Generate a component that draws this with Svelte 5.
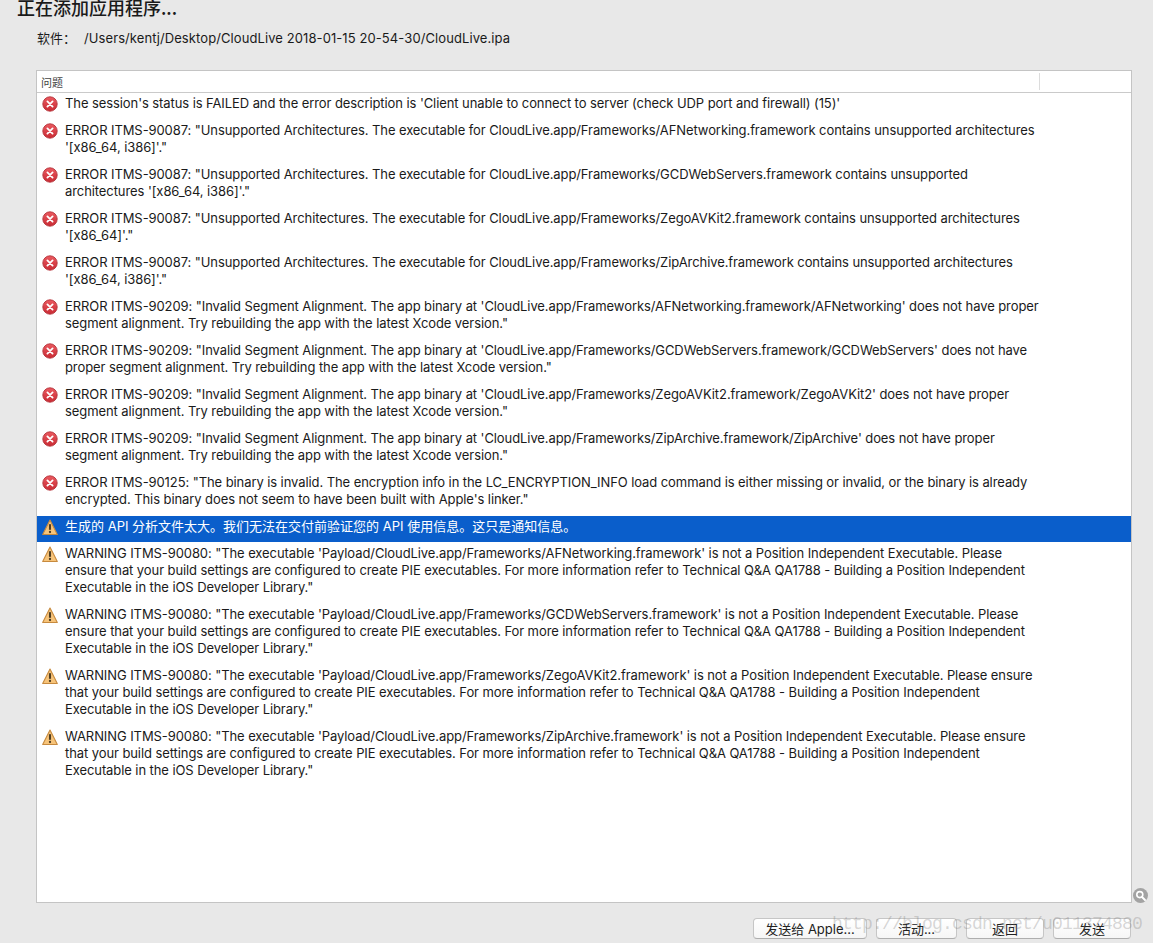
<script>
  const issues = [
    { type: "error", lines: ["The session's status is FAILED and the error description is 'Client unable to connect to server (check UDP port and firewall) (15)'"] },
    { type: "error", lines: ['ERROR ITMS-90087: "Unsupported Architectures. The executable for CloudLive.app/Frameworks/AFNetworking.framework contains unsupported architectures', "'[x86_64, i386]'.\""] },
    { type: "error", lines: ['ERROR ITMS-90087: "Unsupported Architectures. The executable for CloudLive.app/Frameworks/GCDWebServers.framework contains unsupported', "architectures '[x86_64, i386]'.\""] },
    { type: "error", lines: ['ERROR ITMS-90087: "Unsupported Architectures. The executable for CloudLive.app/Frameworks/ZegoAVKit2.framework contains unsupported architectures', "'[x86_64]'.\""] },
    { type: "error", lines: ['ERROR ITMS-90087: "Unsupported Architectures. The executable for CloudLive.app/Frameworks/ZipArchive.framework contains unsupported architectures', "'[x86_64, i386]'.\""] },
    { type: "error", lines: ["ERROR ITMS-90209: \"Invalid Segment Alignment. The app binary at 'CloudLive.app/Frameworks/AFNetworking.framework/AFNetworking' does not have proper", 'segment alignment. Try rebuilding the app with the latest Xcode version."'] },
    { type: "error", lines: ["ERROR ITMS-90209: \"Invalid Segment Alignment. The app binary at 'CloudLive.app/Frameworks/GCDWebServers.framework/GCDWebServers' does not have", 'proper segment alignment. Try rebuilding the app with the latest Xcode version."'] },
    { type: "error", lines: ["ERROR ITMS-90209: \"Invalid Segment Alignment. The app binary at 'CloudLive.app/Frameworks/ZegoAVKit2.framework/ZegoAVKit2' does not have proper", 'segment alignment. Try rebuilding the app with the latest Xcode version."'] },
    { type: "error", lines: ["ERROR ITMS-90209: \"Invalid Segment Alignment. The app binary at 'CloudLive.app/Frameworks/ZipArchive.framework/ZipArchive' does not have proper", 'segment alignment. Try rebuilding the app with the latest Xcode version."'] },
    { type: "error", lines: ['ERROR ITMS-90125: "The binary is invalid. The encryption info in the LC_ENCRYPTION_INFO load command is either missing or invalid, or the binary is already', "encrypted. This binary does not seem to have been built with Apple's linker.\""] },
    { type: "warn", selected: true, lines: ["生成的 API 分析文件太大。我们无法在交付前验证您的 API 使用信息。这只是通知信息。"] },
    { type: "warn", lines: ["WARNING ITMS-90080: \"The executable 'Payload/CloudLive.app/Frameworks/AFNetworking.framework' is not a Position Independent Executable. Please", "ensure that your build settings are configured to create PIE executables. For more information refer to Technical Q&A QA1788 - Building a Position Independent", 'Executable in the iOS Developer Library."'] },
    { type: "warn", lines: ["WARNING ITMS-90080: \"The executable 'Payload/CloudLive.app/Frameworks/GCDWebServers.framework' is not a Position Independent Executable. Please", "ensure that your build settings are configured to create PIE executables. For more information refer to Technical Q&A QA1788 - Building a Position Independent", 'Executable in the iOS Developer Library."'] },
    { type: "warn", lines: ["WARNING ITMS-90080: \"The executable 'Payload/CloudLive.app/Frameworks/ZegoAVKit2.framework' is not a Position Independent Executable. Please ensure", "that your build settings are configured to create PIE executables. For more information refer to Technical Q&A QA1788 - Building a Position Independent", 'Executable in the iOS Developer Library."'] },
    { type: "warn", lines: ["WARNING ITMS-90080: \"The executable 'Payload/CloudLive.app/Frameworks/ZipArchive.framework' is not a Position Independent Executable. Please ensure", "that your build settings are configured to create PIE executables. For more information refer to Technical Q&A QA1788 - Building a Position Independent", 'Executable in the iOS Developer Library."'] }
  ];
</script>

<div class="window">
  <h1>正在添加应用程序...</h1>
  <div class="meta">
    <span class="label">软件：</span>
    <span class="path">/Users/kentj/Desktop/CloudLive 2018-01-15 20-54-30/CloudLive.ipa</span>
  </div>

  <div class="panel">
    <div class="head">
      <span class="head-title">问题</span>
      <i class="head-sep"></i>
    </div>
    {#each issues as issue}
      <div class="row" class:row--selected={issue.selected}>
        {#if issue.type === "error"}
          <svg class="icon" width="16" height="16" viewBox="0 0 16 16">
            <defs>
              <linearGradient id="err" x1="0" y1="0" x2="0" y2="1">
                <stop offset="0" stop-color="#ea5a60" />
                <stop offset="1" stop-color="#c92a33" />
              </linearGradient>
            </defs>
            <circle cx="8" cy="8" r="7.2" fill="url(#err)" stroke="#b4333a" stroke-width="0.9" />
            <path d="M5.4 5.4l5.2 5.2M10.6 5.4l-5.2 5.2" stroke="#fff" stroke-width="1.8" stroke-linecap="round" />
          </svg>
        {:else}
          <svg class="icon" width="16" height="17" viewBox="0 0 16 17">
            <path d="M8 1L15.3 15.5H0.7Z" fill="#f7c47a" stroke="#c78a3e" stroke-width="1.1" stroke-linejoin="round" />
            <path d="M8 5.2v5.6" stroke="#4f3d22" stroke-width="2.1" />
            <circle cx="8" cy="13" r="1.15" fill="#4f3d22" />
          </svg>
        {/if}
        <div class="text">
          {#each issue.lines as line}
            <div>{line}</div>
          {/each}
        </div>
      </div>
    {/each}
  </div>

  <svg class="zoom" width="15" height="15" viewBox="0 0 15 15">
    <circle cx="7.5" cy="7.5" r="7.5" fill="#a3a3a3" />
    <circle cx="6.8" cy="6.6" r="3" fill="none" stroke="#fff" stroke-width="1.6" />
    <path d="M9 9l3 3" stroke="#fff" stroke-width="2" stroke-linecap="round" />
  </svg>

  <div class="actions">
    <button class="send-apple">发送给 Apple...</button>
    <button class="activity">活动...</button>
    <button class="plain">返回</button>
    <button class="plain">发送</button>
  </div>

  <span class="watermark">http://blog.csdn.net/u011374880</span>
</div>

<style>
  :global(body) {
    margin: 0;
    background: #e8e8e8;
  }

  .window {
    position: relative;
    display: flex;
    flex-direction: column;
    height: 943px;
    overflow: hidden;
    background: #e8e8e8;
    color: #1a1a1a;
    font-family: Inter, "Noto Sans CJK SC", sans-serif;
    font-size: 13px;
    box-sizing: border-box;
  }

  h1 {
    margin: 0 0 0 17px;
    font-size: 18px;
    line-height: 14px;
    font-weight: 500;
    font-family: "Noto Sans CJK SC", sans-serif;
  }

  .meta {
    display: flex;
    margin: 15px 0 0 37px;
    line-height: 18px;
    height: 41px;
  }

  .label {
    width: 47px;
  }

  .path {
    letter-spacing: 0.09px;
  }

  .panel {
    height: 833px;
    margin: 0 21px 0 36px;
    background: #fff;
    border: 1px solid #c4c4c4;
    box-sizing: border-box;
  }

  .head {
    display: flex;
    align-items: center;
    height: 21px;
    border-bottom: 1px solid #cacaca;
    font-size: 11px;
    color: #444;
    font-family: "Noto Sans CJK SC", sans-serif;
  }

  .head-title {
    flex: 1;
    padding-left: 4px;
  }

  .head-sep {
    width: 1px;
    height: 17px;
    margin-right: 91px;
    background: #dcdcdc;
  }

  .row {
    display: flex;
    padding: 2px 0 8px 5px;
    line-height: 17px;
    white-space: nowrap;
  }

  .row--selected {
    height: 16px;
    background: #0a5ecb;
    color: #fff;
  }

  .icon {
    flex: none;
    margin-right: 7px;
    margin-top: 1px;
  }

  .text {
    letter-spacing: -0.085px;
  }

  .row--selected .text {
    letter-spacing: 0;
  }

  .row--selected + .row {
    padding-top: 3px;
  }

  .zoom {
    position: absolute;
    left: 1133px;
    top: 888px;
  }

  .actions {
    display: flex;
    justify-content: flex-end;
    gap: 9px;
    margin: 15px 22px 0 0;
  }

  button {
    height: 21px;
    padding: 0;
    background: linear-gradient(#fff, #f6f6f6);
    border: 1px solid #c6c6c6;
    border-bottom-color: #aeaeae;
    border-radius: 4px;
    color: #222;
    font: inherit;
    box-sizing: border-box;
  }

  .send-apple {
    width: 114px;
  }

  .activity {
    width: 81px;
  }

  .plain {
    width: 78px;
  }

  .watermark {
    position: absolute;
    left: 832px;
    top: 914px;
    font-family: "Liberation Mono", monospace;
    font-size: 18px;
    line-height: 20px;
    letter-spacing: -0.8px;
    color: rgba(120, 120, 120, 0.3);
    white-space: nowrap;
  }
</style>
